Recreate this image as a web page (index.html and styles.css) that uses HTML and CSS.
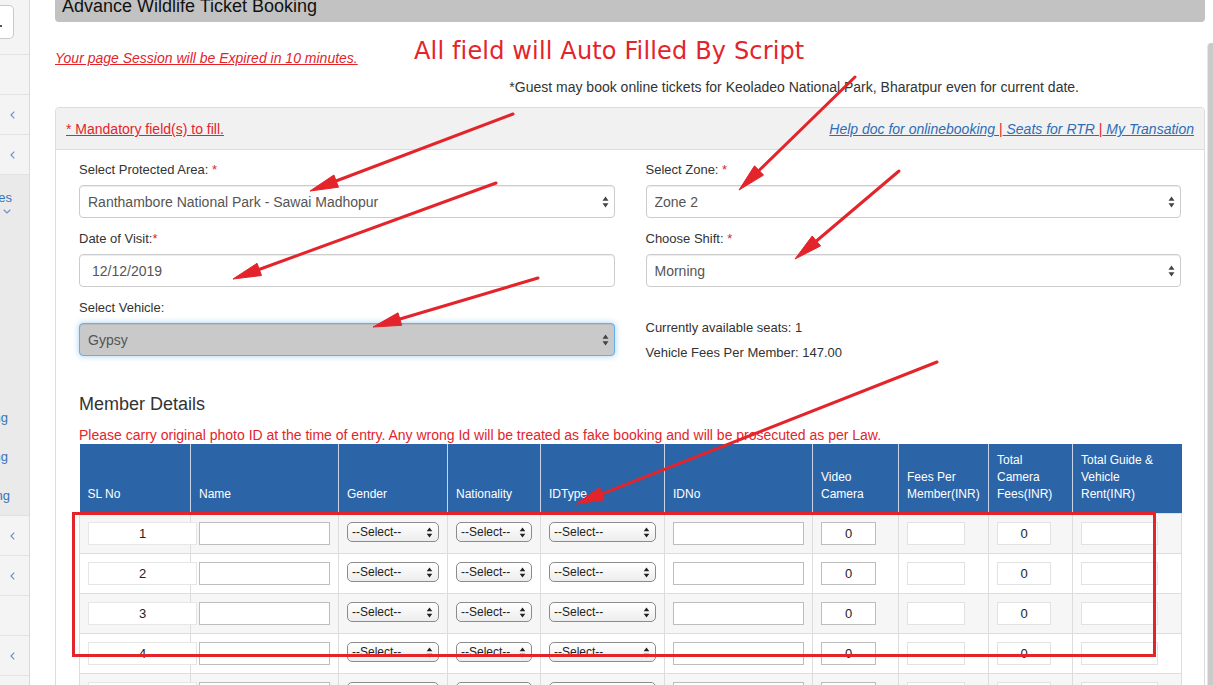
FILE: index.html
```html
<!DOCTYPE html>
<html lang="en">
<head>
<meta charset="utf-8">
<title>Advance Wildlife Ticket Booking</title>
<link rel="stylesheet" href="styles.css">
</head>
<body>
<div class="app">
  <aside class="sidebar">
    <div class="sb-top"><div class="sb-search"><span class="sb-dot"></span></div></div>
    <div class="sb-item"></div>
    <div class="sb-item"><svg class="chev" viewBox="0 0 5 8"><path d="M4.3 0.7L1 4l3.3 3.3"/></svg></div>
    <div class="sb-item"><svg class="chev" viewBox="0 0 5 8"><path d="M4.3 0.7L1 4l3.3 3.3"/></svg></div>
    <div class="sb-open">
      <div class="sb-open-head">
        <div class="sb-line"><span>Wildlife Services</span></div>
        <div class="sb-line sb-down"><svg class="chev-down" viewBox="0 0 8 5"><path d="M0.7 0.8L4 4l3.3-3.2"/></svg></div>
      </div>
      <ul class="sb-sub">
        <li></li>
        <li></li>
        <li></li>
        <li></li>
        <li class="t1"><span>Advance Booking</span></li>
        <li class="t2"><span>Current Booking</span></li>
        <li class="t3"><span>Group Booking</span></li>
      </ul>
    </div>
    <div class="sb-item"><svg class="chev" viewBox="0 0 5 8"><path d="M4.3 0.7L1 4l3.3 3.3"/></svg></div>
    <div class="sb-item"><svg class="chev" viewBox="0 0 5 8"><path d="M4.3 0.7L1 4l3.3 3.3"/></svg></div>
    <div class="sb-item"></div>
    <div class="sb-item"><svg class="chev" viewBox="0 0 5 8"><path d="M4.3 0.7L1 4l3.3 3.3"/></svg></div>
    <div class="sb-item"></div>
  </aside>

  <main class="main">
    <div class="title-bar"><h1>Advance Wildlife Ticket Booking</h1></div>
    <p class="session"><a href="#">Your page Session will be Expired in 10 minutes.</a></p>
    <p class="guest-note">*Guest may book online tickets for Keoladeo National Park, Bharatpur even for current date.</p>

    <section class="panel">
      <div class="panel-head">
        <a class="mandatory" href="#">* Mandatory field(s) to fill.</a>
        <div class="links"><a href="#">Help doc for onlinebooking</a><span class="sep"> |</span><a href="#"> Seats for RTR</a><span class="sep"> |</span><a href="#"> My Transation</a></div>
      </div>
      <div class="panel-body">
        <div class="form-grid">
          <div class="col">
            <div class="form-group">
              <label>Select Protected Area: <span class="req">*</span></label>
              <select class="form-control"><option>Ranthambore National Park - Sawai Madhopur</option></select>
            </div>
            <div class="form-group">
              <label>Date of Visit:<span class="req">*</span></label>
              <input class="form-control date" type="text" value="12/12/2019">
            </div>
            <div class="form-group">
              <label>Select Vehicle:</label>
              <select class="form-control vehicle"><option>Gypsy</option></select>
            </div>
          </div>
          <div class="col">
            <div class="form-group">
              <label>Select Zone: <span class="req">*</span></label>
              <select class="form-control"><option>Zone 2</option></select>
            </div>
            <div class="form-group">
              <label>Choose Shift: <span class="req">*</span></label>
              <select class="form-control"><option>Morning</option></select>
            </div>
            <div class="info">
              <p>Currently available seats: 1</p>
              <p>Vehicle Fees Per Member: 147.00</p>
            </div>
          </div>
        </div>

        <h4>Member Details</h4>
        <p class="warning">Please carry original photo ID at the time of entry. Any wrong Id will be treated as fake booking and will be prosecuted as per Law.</p>

        <table class="members">
          <colgroup>
            <col class="w-sl"><col class="w-name"><col class="w-gender"><col class="w-nat"><col class="w-idt">
            <col class="w-idno"><col class="w-vid"><col class="w-fee"><col class="w-tcam"><col class="w-tg">
          </colgroup>
          <thead>
            <tr>
              <th>SL No</th><th>Name</th><th>Gender</th><th>Nationality</th><th>IDType</th><th>IDNo</th>
              <th>Video<br>Camera</th><th>Fees Per<br>Member(INR)</th><th>Total<br>Camera<br>Fees(INR)</th><th>Total Guide &amp;<br>Vehicle<br>Rent(INR)</th>
            </tr>
          </thead>
          <tbody>
            <tr>
              <td><input class="in in-sl" type="text" value="1"></td>
              <td><input class="in in-name" type="text"></td>
              <td><select class="sel sel-g"><option>--Select--</option></select></td>
              <td><select class="sel sel-n"><option>--Select--</option></select></td>
              <td><select class="sel sel-t"><option>--Select--</option></select></td>
              <td><input class="in in-idno" type="text"></td>
              <td><input class="in in-vid" type="text" value="0"></td>
              <td><input class="in in-fee" type="text"></td>
              <td><input class="in in-tcam" type="text" value="0"></td>
              <td><input class="in in-tg" type="text"></td>
            </tr>
            <tr>
              <td><input class="in in-sl" type="text" value="2"></td>
              <td><input class="in in-name" type="text"></td>
              <td><select class="sel sel-g"><option>--Select--</option></select></td>
              <td><select class="sel sel-n"><option>--Select--</option></select></td>
              <td><select class="sel sel-t"><option>--Select--</option></select></td>
              <td><input class="in in-idno" type="text"></td>
              <td><input class="in in-vid" type="text" value="0"></td>
              <td><input class="in in-fee" type="text"></td>
              <td><input class="in in-tcam" type="text" value="0"></td>
              <td><input class="in in-tg" type="text"></td>
            </tr>
            <tr>
              <td><input class="in in-sl" type="text" value="3"></td>
              <td><input class="in in-name" type="text"></td>
              <td><select class="sel sel-g"><option>--Select--</option></select></td>
              <td><select class="sel sel-n"><option>--Select--</option></select></td>
              <td><select class="sel sel-t"><option>--Select--</option></select></td>
              <td><input class="in in-idno" type="text"></td>
              <td><input class="in in-vid" type="text" value="0"></td>
              <td><input class="in in-fee" type="text"></td>
              <td><input class="in in-tcam" type="text" value="0"></td>
              <td><input class="in in-tg" type="text"></td>
            </tr>
            <tr>
              <td><input class="in in-sl" type="text" value="4"></td>
              <td><input class="in in-name" type="text"></td>
              <td><select class="sel sel-g"><option>--Select--</option></select></td>
              <td><select class="sel sel-n"><option>--Select--</option></select></td>
              <td><select class="sel sel-t"><option>--Select--</option></select></td>
              <td><input class="in in-idno" type="text"></td>
              <td><input class="in in-vid" type="text" value="0"></td>
              <td><input class="in in-fee" type="text"></td>
              <td><input class="in in-tcam" type="text" value="0"></td>
              <td><input class="in in-tg" type="text"></td>
            </tr>
            <tr>
              <td><input class="in in-sl" type="text" value="5"></td>
              <td><input class="in in-name" type="text"></td>
              <td><select class="sel sel-g"><option>--Select--</option></select></td>
              <td><select class="sel sel-n"><option>--Select--</option></select></td>
              <td><select class="sel sel-t"><option>--Select--</option></select></td>
              <td><input class="in in-idno" type="text"></td>
              <td><input class="in in-vid" type="text" value="0"></td>
              <td><input class="in in-fee" type="text"></td>
              <td><input class="in in-tcam" type="text" value="0"></td>
              <td><input class="in in-tg" type="text"></td>
            </tr>
          </tbody>
        </table>
      </div>
    </section>
  </main>

  <div class="scrollbar"></div>

  <div class="annot-text">All field will Auto Filled By Script</div>
  <svg class="annotations" width="1213" height="685" viewBox="0 0 1213 685">
    <g class="arrow">
      <line x1="513" y1="114" x2="336" y2="181"/>
      <polygon points="310,191 333.9,175 338.5,187.2"/>
    </g>
    <g class="arrow">
      <line x1="496" y1="183" x2="259" y2="269.5"/>
      <polygon points="233,279 257.1,263.3 261.5,275.5"/>
    </g>
    <g class="arrow">
      <line x1="538" y1="278" x2="400" y2="319"/>
      <polygon points="373,327 398,312.8 401.7,325.3"/>
    </g>
    <g class="arrow">
      <line x1="855" y1="77" x2="759" y2="170.5"/>
      <polygon points="739,190 754.5,165.8 763.6,175.1"/>
    </g>
    <g class="arrow">
      <line x1="899" y1="171" x2="816.4" y2="241"/>
      <polygon points="795,259 812.2,236 820.6,245.9"/>
    </g>
    <g class="arrow">
      <line x1="937" y1="362" x2="602" y2="493.8"/>
      <polygon points="576,504 599.7,487.7 604.4,499.8"/>
    </g>
    <rect class="box" x="73.5" y="513.5" width="1081" height="142"/>
  </svg>
</div>
</body>
</html>
```

FILE: styles.css
```css
* { box-sizing: border-box; }

html, body {
  margin: 0;
  height: 685px;
  overflow: hidden;
  background: #fff;
}

body {
  font-family: "Liberation Sans", Arial, sans-serif;
  font-size: 13px;
  line-height: 18px;
  color: #333;
}

.app {
  position: relative;
  display: flex;
  height: 685px;
}

/* ---------- sidebar ---------- */
.sidebar {
  flex: none;
  width: 30px;
  background: #f4f4f4;
  border-right: 1px solid #dadada;
  overflow: hidden;
}

.sb-top {
  height: 55px;
  padding-top: 5px;
  border-bottom: 1px solid #e3e3e3;
}

.sb-search {
  display: flex;
  align-items: flex-end;
  width: 14px;
  height: 34px;
  padding-bottom: 11px;
  background: #fff;
  border: 1px solid #c9c9c9;
  border-left: 0;
  border-radius: 0 5px 5px 0;
}

.sb-dot {
  width: 2px;
  height: 2px;
  background: #555;
}

.sb-item {
  height: 40px;
  display: flex;
  align-items: center;
  justify-content: flex-end;
  padding-right: 14px;
  border-bottom: 1px solid #e3e3e3;
}

.chev {
  width: 5px;
  height: 8px;
  fill: none;
  stroke: #6f93c6;
  stroke-width: 1.2;
}

.sb-open {
  background: #eaeaea;
  border-bottom: 1px solid #e0e0e0;
}

.sb-open-head {
  height: 67px;
  padding-top: 15px;
}

.sb-line {
  display: flex;
  justify-content: flex-end;
  white-space: nowrap;
  padding-right: 17px;
  line-height: 16px;
  color: #3a74b8;
}

.sb-down {
  padding-right: 18px;
  margin-top: 3px;
}

.chev-down {
  width: 8px;
  height: 5px;
  fill: none;
  stroke: #6f93c6;
  stroke-width: 1.2;
}

.sb-sub {
  list-style: none;
  margin: 0;
  padding: 0;
}

.sb-sub li {
  height: 39px;
  display: flex;
  align-items: center;
  justify-content: flex-end;
  white-space: nowrap;
  padding-right: 21px;
  color: #3a74b8;
}

.sb-sub li.t3 { padding-right: 19px; }

/* ---------- main ---------- */
.main {
  flex: none;
  width: 1150px;
  margin-left: 25px;
}

.title-bar {
  height: 22px;
  overflow: hidden;
  padding: 0 7px;
  background: #c2c2c2;
  border-radius: 0 0 4px 4px;
}

.title-bar h1 {
  margin: -3px 0 0;
  font-size: 18px;
  line-height: 18px;
  font-weight: normal;
  color: #111;
}

.session {
  margin: 27px 0 0;
  font-size: 14px;
}

.session a {
  color: #e3242b;
  font-style: italic;
  text-decoration: underline;
}

.guest-note {
  margin: 11px 0 0;
  text-align: right;
  padding-right: 126px;
  font-size: 14px;
  color: #333;
}

/* ---------- panel ---------- */
.panel {
  margin-top: 11px;
  border: 1px solid #dcdcdc;
  border-radius: 4px;
}

.panel-head {
  display: flex;
  justify-content: space-between;
  padding: 12px 10px 11px;
  font-size: 14px;
  background: #f1f1f1;
  border-bottom: 1px solid #dcdcdc;
  border-radius: 4px 4px 0 0;
}

.mandatory {
  color: #e3242b;
  text-decoration: underline;
}

.links a {
  color: #2f6db5;
  font-style: italic;
  text-decoration: underline;
}

.links .sep {
  color: #e3242b;
  text-decoration: underline;
  text-decoration-color: #e3242b;
}

.panel-body {
  padding: 11px 23px 0 23px;
}

.form-grid {
  display: grid;
  grid-template-columns: 1fr 1fr;
  column-gap: 31px;
}

.form-group {
  margin-bottom: 12px;
}

.form-group label {
  display: block;
  margin-bottom: 6px;
  line-height: 18px;
  color: #333;
}

.req { color: #e3242b; }

.form-control {
  display: block;
  width: 100%;
  height: 33px;
  padding: 0 8px;
  font-family: "Liberation Sans", Arial, sans-serif;
  font-size: 14px;
  color: #555;
  background-color: #fff;
  border: 1px solid #cccccc;
  border-radius: 4px;
  box-shadow: inset 0 1px 1px rgba(0, 0, 0, 0.075);
}

select.form-control {
  appearance: none;
  -webkit-appearance: none;
  background-image: url("data:image/svg+xml,%3Csvg xmlns='http://www.w3.org/2000/svg' width='7' height='12'%3E%3Cpath d='M3.5 0.5L6.5 4.7H0.5zM0.5 7.3H6.5L3.5 11.5z' fill='%23444'/%3E%3C/svg%3E");
  background-repeat: no-repeat;
  background-position: right 5px center;
}

.form-control.date { padding-left: 12px; }

select.form-control.vehicle {
  background-color: #c9c9c9;
  border-color: #66afe9;
  box-shadow: inset 0 1px 1px rgba(0, 0, 0, 0.075), 0 0 6px rgba(102, 175, 233, 0.6);
}

.info {
  padding-top: 20px;
}

.info p {
  margin: 0 0 7px;
}

.panel-body h4 {
  margin: 25px 0 12px;
  font-size: 18px;
  line-height: 20px;
  font-weight: normal;
  color: #333;
}

.warning {
  margin: 0;
  font-size: 14px;
  color: #e3242b;
}

/* ---------- members table ---------- */
.members {
  width: 100%;
  table-layout: fixed;
  border-collapse: collapse;
}

.w-sl { width: 111px; }
.w-name { width: 148px; }
.w-gender { width: 109px; }
.w-nat { width: 93px; }
.w-idt { width: 124px; }
.w-idno { width: 148px; }
.w-vid { width: 86px; }
.w-fee { width: 90px; }
.w-tcam { width: 84px; }
.w-tg { width: 109px; }

.members th {
  padding: 8px 8px 10px;
  background: #2c64a8;
  color: #fff;
  font-size: 12px;
  line-height: 17px;
  font-weight: normal;
  text-align: left;
  vertical-align: bottom;
  border-left: 1px solid #c9d5e6;
}

.members th:first-child { border-left: 0; }

.members td {
  padding: 8px 8px;
  border: 1px solid #dddddd;
  vertical-align: middle;
  overflow: visible;
}

.members tbody tr:nth-child(odd) td { background: #f6f6f6; }
.members tbody tr:nth-child(even) td { background: #ffffff; }

.in {
  display: block;
  height: 23px;
  padding: 0 4px;
  font-family: "Liberation Sans", Arial, sans-serif;
  font-size: 13px;
  color: #222;
  background: #fff;
  border: 1px solid #bdbdbd;
  border-radius: 0;
}

.in-sl {
  width: 109px;
  position: relative;
  z-index: 1;
  border-color: #e6e6e6;
  text-align: center;
}
.in-name { width: 131px; position: relative; z-index: 2; }
.in-idno { width: 131px; }
.in-vid { width: 55px; text-align: center; }
.in-fee { width: 58px; border-color: #e2e2e2; }
.in-tcam { width: 54px; text-align: center; border-color: #e2e2e2; }
.in-tg { width: 77px; border-color: #e2e2e2; }

.sel {
  display: block;
  height: 20px;
  margin-bottom: 3px;
  padding: 0 0 0 4px;
  font-family: "Liberation Sans", Arial, sans-serif;
  font-size: 12px;
  color: #222;
  border: 1px solid #8c8c8c;
  border-radius: 5px;
  appearance: none;
  -webkit-appearance: none;
  background-image: url("data:image/svg+xml,%3Csvg xmlns='http://www.w3.org/2000/svg' width='7' height='11'%3E%3Cpath d='M3.5 0.5L6.3 4.3H0.7zM0.7 6.7H6.3L3.5 10.5z' fill='%23222'/%3E%3C/svg%3E"), linear-gradient(#ffffff, #ededed);
  background-repeat: no-repeat, no-repeat;
  background-position: right 5px center, 0 0;
}

.sel-g { width: 92px; }
.sel-n { width: 76px; }
.sel-t { width: 107px; }

/* ---------- overlays ---------- */
.scrollbar {
  position: absolute;
  left: 1207px;
  top: 43px;
  bottom: 0;
  width: 6px;
  background: #cacaca;
  border-left: 1px solid #e6e6e6;
  border-radius: 4px 0 0 0;
}

.annot-text {
  position: absolute;
  left: 414px;
  top: 39px;
  font-family: "DejaVu Sans", Verdana, sans-serif;
  font-size: 24px;
  line-height: 24px;
  letter-spacing: 0.15px;
  color: #e3242b;
  white-space: nowrap;
  z-index: 5;
}

.annotations {
  position: absolute;
  left: 0;
  top: 0;
  z-index: 6;
  pointer-events: none;
}

.arrow line {
  stroke: #e3242b;
  stroke-width: 3;
  stroke-linecap: round;
}

.arrow polygon {
  fill: #e3242b;
  stroke: #e3242b;
  stroke-width: 1;
  stroke-linejoin: round;
}

.box {
  fill: none;
  stroke: #e3242b;
  stroke-width: 3;
}
```
